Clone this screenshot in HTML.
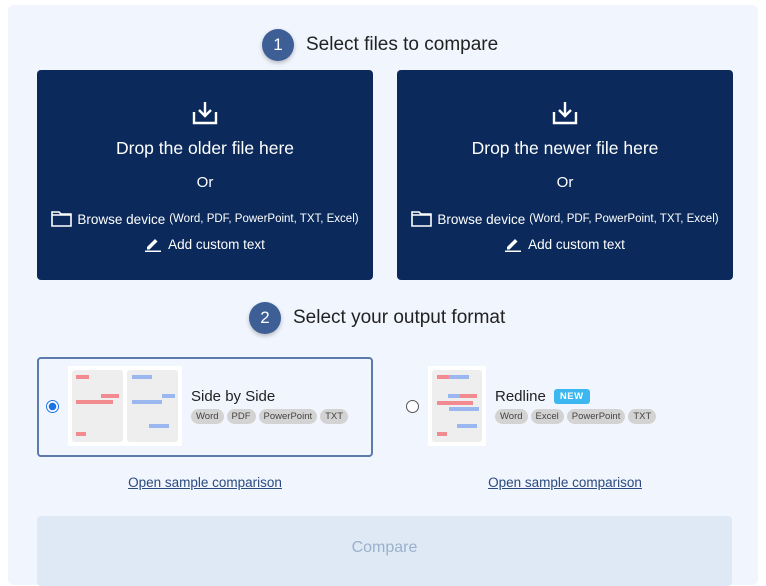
<!DOCTYPE html>
<html><head><style>
*{margin:0;padding:0;box-sizing:border-box}
body{width:766px;height:570px;background:#fff;font-family:"Liberation Sans",sans-serif;position:relative;overflow:hidden;color:#222}
.panel{position:absolute;left:8px;top:5px;width:750px;height:580px;background:#f1f5fd;border-radius:6px}
.step{position:absolute;display:flex;align-items:center}
.num{width:32px;height:32px;border-radius:50%;background:#3d5f96;color:#fff;font-size:17px;display:flex;align-items:center;justify-content:center;box-shadow:0 2px 4px rgba(0,0,0,.25)}
.stxt{font-size:19px;color:#222;margin-left:12px}
.box{position:absolute;top:70px;width:336px;height:210px;background:#0b2a5b;border-radius:4px;color:#fff;text-align:center}
.box .t{position:absolute;top:68px;width:100%;font-size:17.5px}
.box .or{position:absolute;top:104px;width:100%;font-size:15px}
.box .br{position:absolute;top:141px;width:100%;font-size:13.5px;display:flex;justify-content:center;align-items:center}
.box .br small{font-size:11.5px;margin-left:4px}
.box .ad{position:absolute;top:166px;width:100%;font-size:13.5px;display:flex;justify-content:center;align-items:center}
.card{position:absolute;top:357px;height:100px;width:336px;border-radius:4px}
.sel{border:2px solid #5c7bab}
.radio{position:absolute;width:13px;height:13px;border-radius:50%}
.thumb{position:absolute;background:#fff}
.pg{position:absolute;background:#eee;border-radius:3px}
.bar{position:absolute;height:4px}
.r{background:#f28b8f}.b{background:#9bb7f0}
.name{position:absolute;font-size:15px;color:#222}
.tags{position:absolute;display:flex;gap:3px}
.tag{background:#d3d3d3;border-radius:8px;font-size:9.5px;color:#444;padding:2px 5px;height:15px;line-height:11px}
.new{display:inline-block;background:#3cb7f0;color:#fff;font-size:9.5px;font-weight:bold;padding:2px 6px;border-radius:3px;margin-left:8px;vertical-align:2px;letter-spacing:.5px}
.link{position:absolute;top:475px;font-size:13.5px;color:#2a4a7f;text-decoration:underline;width:336px;text-align:center}
.btn{position:absolute;left:37px;top:516px;width:695px;height:70px;background:#dfe9f5;border-radius:4px;color:#9cb0cc;font-size:16px;text-align:center;padding-top:23px}
</style></head><body>
<div class="panel"></div>
<div class="step" style="left:262px;top:29px"><div class="num">1</div><div class="stxt">Select files to compare</div></div>

<div class="box" style="left:37px">
<svg style="position:absolute;left:155px;top:30px" width="26" height="26" viewBox="0 0 26 26" fill="none" stroke="#fff" stroke-width="2.4"><path d="M2 12v11h22V12"/><path d="M13 2v14M7 10l6 6 6-6"/></svg>
<div class="t">Drop the older file here</div><div class="or">Or</div>
<div class="br"><svg width="21" height="16" viewBox="0 0 21 16" fill="none" stroke="#fff" stroke-width="1.6" style="margin-right:5px"><path d="M1 1h7l2 2h10v12H1z M1 4h19"/></svg>Browse device<small>(Word, PDF, PowerPoint, TXT, Excel)</small></div>
<div class="ad"><svg width="16" height="16" viewBox="0 0 16 16" style="margin-right:7px"><path d="M2 11L10 3l2.5 2.5-8 8H2z" fill="#fff"/><rect x="0" y="14.5" width="16" height="1.5" fill="#fff"/></svg>Add custom text</div>
</div>
<div class="box" style="left:397px">
<svg style="position:absolute;left:155px;top:30px" width="26" height="26" viewBox="0 0 26 26" fill="none" stroke="#fff" stroke-width="2.4"><path d="M2 12v11h22V12"/><path d="M13 2v14M7 10l6 6 6-6"/></svg>
<div class="t">Drop the newer file here</div><div class="or">Or</div>
<div class="br"><svg width="21" height="16" viewBox="0 0 21 16" fill="none" stroke="#fff" stroke-width="1.6" style="margin-right:5px"><path d="M1 1h7l2 2h10v12H1z M1 4h19"/></svg>Browse device<small>(Word, PDF, PowerPoint, TXT, Excel)</small></div>
<div class="ad"><svg width="16" height="16" viewBox="0 0 16 16" style="margin-right:7px"><path d="M2 11L10 3l2.5 2.5-8 8H2z" fill="#fff"/><rect x="0" y="14.5" width="16" height="1.5" fill="#fff"/></svg>Add custom text</div>
</div>

<div class="step" style="left:249px;top:302px"><div class="num">2</div><div class="stxt">Select your output format</div></div>

<div class="card sel" style="left:37px"></div>
<div class="radio" style="left:46px;top:400px;border:1.5px solid #1a73e8;background:radial-gradient(circle,#1a73e8 3.5px,#fff 4px)"></div>
<div class="thumb" style="left:68px;top:366px;width:114px;height:80px">
<div class="pg" style="left:4px;top:4px;width:51px;height:72px"></div>
<div class="pg" style="left:59px;top:4px;width:51px;height:72px"></div>
<div class="bar r" style="left:8px;top:9px;width:13px"></div>
<div class="bar r" style="left:33px;top:28px;width:18px"></div>
<div class="bar r" style="left:8px;top:34px;width:37px"></div>
<div class="bar r" style="left:8px;top:66px;width:10px"></div>
<div class="bar b" style="left:64px;top:9px;width:20px"></div>
<div class="bar b" style="left:94px;top:28px;width:13px"></div>
<div class="bar b" style="left:64px;top:34px;width:30px"></div>
<div class="bar b" style="left:81px;top:58px;width:20px"></div>
</div>
<div class="name" style="left:191px;top:388px">Side by Side</div>
<div class="tags" style="left:191px;top:409px"><span class="tag">Word</span><span class="tag">PDF</span><span class="tag">PowerPoint</span><span class="tag">TXT</span></div>

<div class="radio" style="left:406px;top:400px;border:1px solid #555;background:#fff"></div>
<div class="thumb" style="left:428px;top:366px;width:58px;height:80px">
<div class="pg" style="left:4px;top:4px;width:50px;height:72px"></div>
<div class="bar r" style="left:9px;top:9px;width:12px"></div>
<div class="bar b" style="left:21px;top:9px;width:20px"></div>
<div class="bar b" style="left:20px;top:28px;width:12px"></div>
<div class="bar r" style="left:32px;top:28px;width:17px"></div>
<div class="bar r" style="left:9px;top:35px;width:36px"></div>
<div class="bar b" style="left:21px;top:41px;width:30px"></div>
<div class="bar b" style="left:29px;top:58px;width:20px"></div>
<div class="bar r" style="left:9px;top:66px;width:10px"></div>
</div>
<div class="name" style="left:495px;top:388px">Redline<span class="new">NEW</span></div>
<div class="tags" style="left:495px;top:409px"><span class="tag">Word</span><span class="tag">Excel</span><span class="tag">PowerPoint</span><span class="tag">TXT</span></div>

<div class="link" style="left:37px">Open sample comparison</div>
<div class="link" style="left:397px">Open sample comparison</div>
<div class="btn">Compare</div>
</body></html>
